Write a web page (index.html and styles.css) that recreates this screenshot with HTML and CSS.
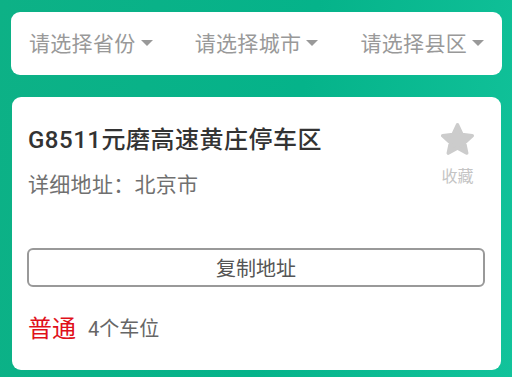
FILE: index.html
```html
<!DOCTYPE html>
<html lang="zh-CN">
<head>
<meta charset="utf-8">
<link rel="stylesheet" href="styles.css">
</head>
<body>
<div class="page">
  <div class="filter">
    <div class="sel"><span>请选择省份</span><i class="tri"></i></div>
    <div class="sel"><span>请选择城市</span><i class="tri"></i></div>
    <div class="sel"><span>请选择县区</span><i class="tri"></i></div>
  </div>
  <div class="card">
    <div class="head">
      <div class="info">
        <div class="title">G8511元磨高速黄庄停车区</div>
        <div class="addr">详细地址：北京市</div>
      </div>
      <div class="fav">
        <svg class="star" width="33" height="32" viewBox="1.9 1.7 20.2 19.4">
          <path d="M12 2.8 14.7 8.7 21 9.4 16.3 13.7 17.6 20 12 16.8 6.4 20 7.7 13.7 3 9.4 9.3 8.7Z" fill="#cccccc" stroke="#cccccc" stroke-width="2.2" stroke-linejoin="round"/>
        </svg>
        <div class="fav-label">收藏</div>
      </div>
    </div>
    <div class="copy">复制地址</div>
    <div class="foot"><span class="type">普通</span><span class="count">4个车位</span></div>
  </div>
</div>
</body>
</html>
```
FILE: styles.css
```css
html, body {
  margin: 0;
  padding: 0;
}
body {
  width: 512px;
  height: 377px;
  overflow: hidden;
  background: linear-gradient(100deg, #0db186 0%, #05b38a 55%, #12c39b 100%);
  font-family: Roboto, "Noto Sans CJK SC", sans-serif;
}
.page {
  padding: 12px 10px 0 11px;
  display: flex;
  flex-direction: column;
  gap: 22px;
}
.filter {
  height: 63px;
  background: #fff;
  border-radius: 9px;
  display: flex;
  align-items: center;
  justify-content: space-between;
  padding: 0 18px;
}
.sel {
  display: flex;
  align-items: center;
  gap: 5px;
  color: #999;
  font-size: 21px;
  line-height: 28px;
  letter-spacing: 0.3px;
}
.tri {
  width: 0;
  height: 0;
  border-left: 6.5px solid transparent;
  border-right: 6.5px solid transparent;
  border-top: 6px solid #999;
  margin-top: -1px;
}
.card {
  margin: 0 1px 0 1px;
  height: 273px;
  box-sizing: border-box;
  background: #fff;
  border-radius: 9px;
  padding: 26px 27px 0 16px;
}
.head {
  display: flex;
  justify-content: space-between;
  align-items: flex-start;
}
.title {
  font-size: 24px;
  line-height: 35px;
  font-weight: 500;
  letter-spacing: 0.5px;
  color: #333;
}
.addr {
  margin-top: 13px;
  font-size: 21px;
  line-height: 28px;
  letter-spacing: 0.3px;
  color: #707070;
}
.fav {
  display: flex;
  flex-direction: column;
  align-items: center;
}
.star {
  display: block;
}
.fav-label {
  margin-top: 12px;
  font-size: 16px;
  line-height: 20px;
  color: #c4c4c4;
}
.copy {
  margin: 49px -11px 0 -1px;
  height: 39px;
  box-sizing: border-box;
  border: 2px solid #999;
  border-radius: 6px;
  display: flex;
  align-items: center;
  justify-content: center;
  font-size: 20px;
  color: #555;
}
.foot {
  margin-top: 26px;
  display: flex;
  align-items: center;
  gap: 12px;
  line-height: 32px;
}
.type {
  font-size: 24px;
  color: #e0101a;
}
.count {
  font-size: 20px;
  color: #666;
}
```
